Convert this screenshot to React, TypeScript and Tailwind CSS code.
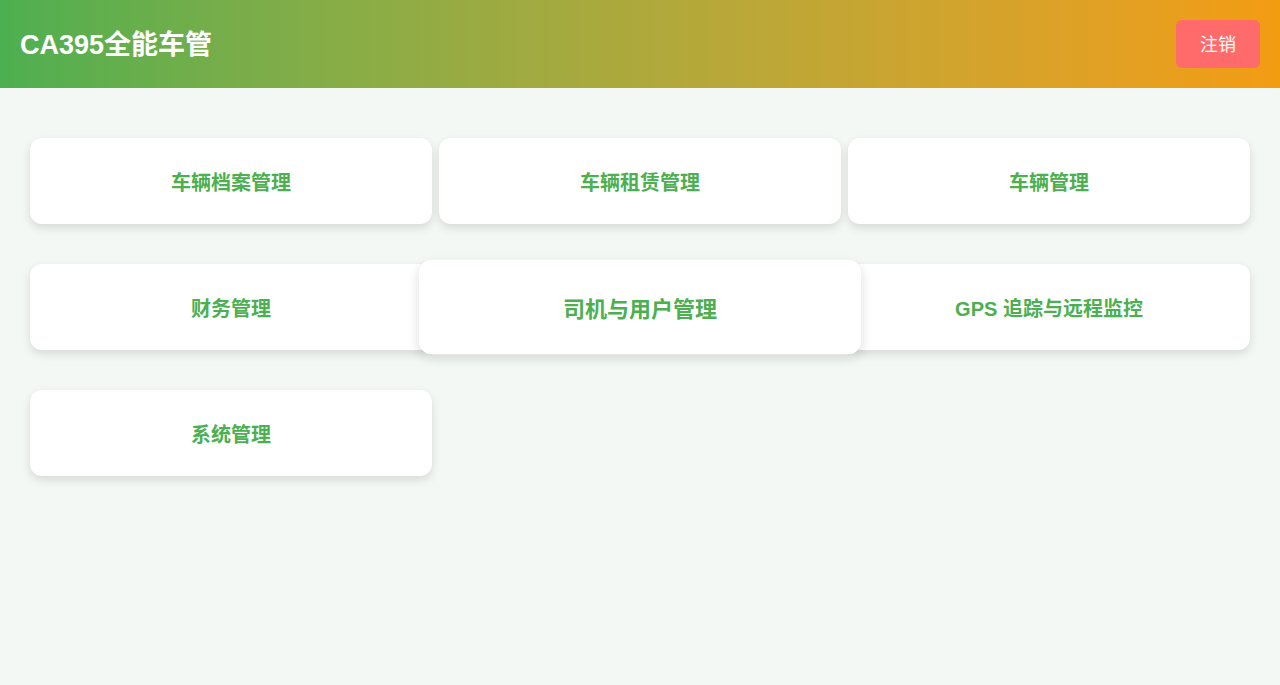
import React from "react";

const modules = [
  "车辆档案管理",
  "车辆租赁管理",
  "车辆管理",
  "财务管理",
  "司机与用户管理",
  "GPS 追踪与远程监控",
  "系统管理",
];

const App: React.FC = () => {
  return (
    <div
      className="min-h-screen bg-[#f4f8f4]"
      style={{ fontFamily: '"Liberation Sans", "Noto Sans CJK SC", sans-serif' }}
    >
      <header className="h-[88px] flex items-center justify-between px-5 bg-gradient-to-r from-[#4caf50] to-[#f39c12]">
        <h1 className="text-[27px] font-bold text-white pt-[3px]">CA395全能车管</h1>
        <button
          type="button"
          className="h-12 px-6 pt-[3px] rounded-md bg-[#ff6b6b] text-white text-[18px]"
        >
          注销
        </button>
      </header>

      <main className="px-[30px] pt-[50px]">
        <div className="grid grid-cols-3 gap-x-[7px] gap-y-10">
          {modules.map((name, index) => (
            <div
              key={name}
              className={
                index === 4
                  ? "h-[86px] pt-[3px] flex items-center justify-center bg-white rounded-xl shadow-[0_4px_10px_rgba(0,0,0,0.12)] scale-110 relative z-10"
                  : "h-[86px] pt-[3px] flex items-center justify-center bg-white rounded-xl shadow-[0_4px_10px_rgba(0,0,0,0.12)]"
              }
            >
              <span className="text-[20px] font-bold text-[#4caf50]">{name}</span>
            </div>
          ))}
        </div>
      </main>
    </div>
  );
};

export default App;
